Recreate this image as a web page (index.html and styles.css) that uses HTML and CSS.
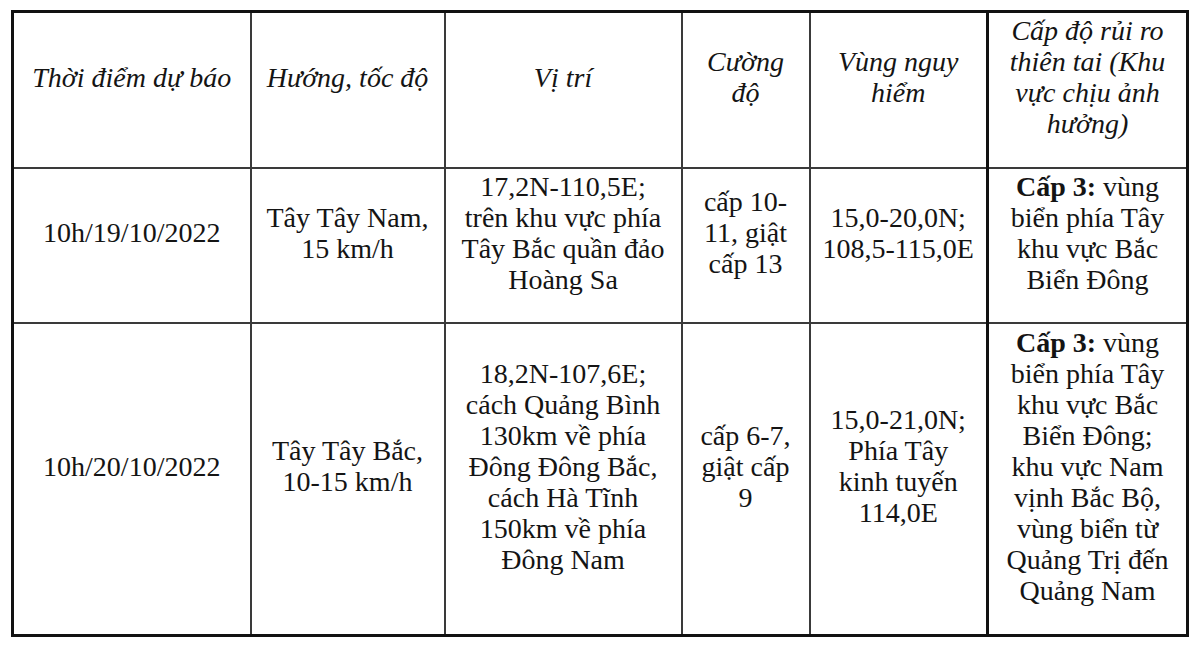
FILE: index.html
```html
<!DOCTYPE html>
<html lang="vi">
<head>
<meta charset="utf-8">
<title>Dự báo</title>
<link rel="stylesheet" href="styles.css">
</head>
<body>
<table class="forecast">
  <colgroup>
    <col class="c1"><col class="c2"><col class="c3"><col class="c4"><col class="c5"><col class="c6">
  </colgroup>
  <tr class="head">
    <th>Thời điểm dự báo</th>
    <th>Hướng, tốc độ</th>
    <th>Vị trí</th>
    <th>Cường<br>độ</th>
    <th>Vùng nguy<br>hiểm</th>
    <th class="risk">Cấp độ rủi ro<br>thiên tai (Khu<br>vực chịu ảnh<br>hưởng)</th>
  </tr>
  <tr class="r1">
    <td>10h/19/10/2022</td>
    <td>Tây Tây Nam,<br>15 km/h</td>
    <td>17,2N-110,5E;<br>trên khu vực phía<br>Tây Bắc quần đảo<br>Hoàng Sa</td>
    <td>cấp 10-<br>11, giật<br>cấp 13</td>
    <td>15,0-20,0N;<br>108,5-115,0E</td>
    <td class="risk"><b>Cấp 3:</b> vùng<br>biển phía Tây<br>khu vực Bắc<br>Biển Đông</td>
  </tr>
  <tr class="r2">
    <td>10h/20/10/2022</td>
    <td>Tây Tây Bắc,<br>10-15 km/h</td>
    <td>18,2N-107,6E;<br>cách Quảng Bình<br>130km về phía<br>Đông Đông Bắc,<br>cách Hà Tĩnh<br>150km về phía<br>Đông Nam</td>
    <td>cấp 6-7,<br>giật cấp<br>9</td>
    <td>15,0-21,0N;<br>Phía Tây<br>kinh tuyến<br>114,0E</td>
    <td class="risk"><b>Cấp 3:</b> vùng<br>biển phía Tây<br>khu vực Bắc<br>Biển Đông;<br>khu vực Nam<br>vịnh Bắc Bộ,<br>vùng biển từ<br>Quảng Trị đến<br>Quảng Nam</td>
  </tr>
</table>
</body>
</html>
```
FILE: styles.css
```css
html, body {
  margin: 0;
  padding: 0;
  background: #ffffff;
}
body {
  width: 1200px;
  height: 646px;
  overflow: hidden;
  font-family: "Liberation Serif", "Times New Roman", serif;
  color: #141414;
}
.forecast {
  margin: 10px 0 0 11px;
  border-collapse: collapse;
  table-layout: fixed;
  border: 3px solid #111;
}
.c1 { width: 238px; }
.c2 { width: 194px; }
.c3 { width: 237px; }
.c4 { width: 128px; }
.c5 { width: 178px; }
.c6 { width: 200px; }
.forecast th,
.forecast td {
  border: 2px solid #3a3a3a;
  padding: 0 0 25px 0;
  text-align: center;
  vertical-align: middle;
  font-size: 28px;
  line-height: 31px;
  white-space: nowrap;
}
.forecast th {
  font-weight: normal;
  font-style: italic;
}
.forecast .risk {
  border-left: 3px solid #111;
  border-right: 3px solid #111;
}
.forecast b {
  font-weight: bold;
}
.head { height: 156px; }
.r1 { height: 155px; }
.r2 { height: 313px; }
```
